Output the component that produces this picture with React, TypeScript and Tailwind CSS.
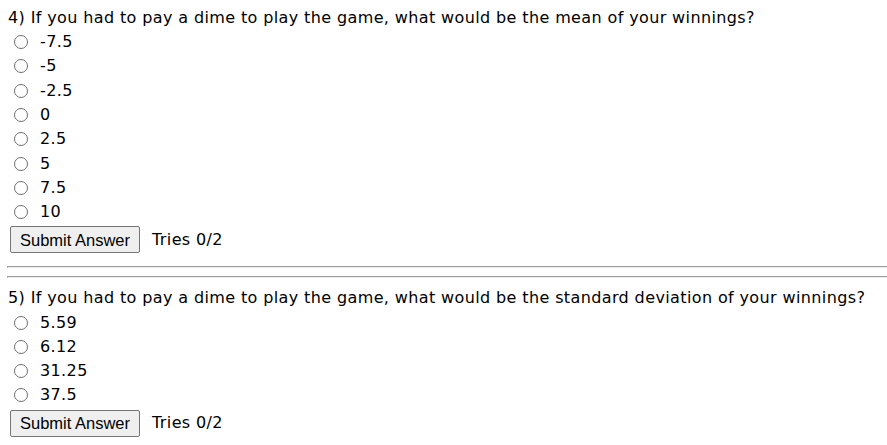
import React from "react";

const font = { fontFamily: '"DejaVu Sans", Verdana, sans-serif', letterSpacing: "0.38px" };

function Question({ title, options, name }: { title: string; options: string[]; name: string }) {
  return (
    <div className="flex flex-col">
      <div className="h-[22px] leading-[20px] text-[16px] text-black">{title}</div>
      <div className="flex flex-col">
        {options.map((o) => (
          <label key={o} className="flex items-center h-[24.3px] pl-[5.5px] text-[16px] text-black">
            <span className="block w-[14px] h-[14px] rounded-full border-[1.2px] border-[#6f6f6f] bg-white shrink-0" />
            <span className="ml-[12.5px] leading-[20px]">{o}</span>
          </label>
        ))}
      </div>
      <div className="flex items-center mt-[2px] ml-[2px]">
        <button
          className="h-[27px] px-[9px] bg-[#efefef] border border-[#767676] rounded-[2px] text-[16.5px] text-black tracking-normal"
          style={{ fontFamily: '"Liberation Sans", Arial, sans-serif' }}
        >
          Submit Answer
        </button>
        <span className="ml-[12px] text-[16px] text-black">Tries 0/2</span>
      </div>
    </div>
  );
}

export default function App() {
  return (
    <div className="bg-white w-[887px] h-[445px] pt-[8px] pl-[8px] overflow-hidden" style={font}>
      <Question
        name="q4"
        title="4) If you had to pay a dime to play the game, what would be the mean of your winnings?"
        options={["-7.5", "-5", "-2.5", "0", "2.5", "5", "7.5", "10"]}
      />
      <div className="mt-[13px] w-[881px] h-[2px] border-t border-l border-[#9a9a9a] border-b border-b-[#eeeeee] ml-[-1px]" />
      <div className="mt-[8px] w-[881px] h-[2px] border-t border-l border-[#9a9a9a] border-b border-b-[#eeeeee] ml-[-1px]" />
      <div className="mt-[10px]">
        <Question
          name="q5"
          title="5) If you had to pay a dime to play the game, what would be the standard deviation of your winnings?"
          options={["5.59", "6.12", "31.25", "37.5"]}
        />
      </div>
    </div>
  );
}
